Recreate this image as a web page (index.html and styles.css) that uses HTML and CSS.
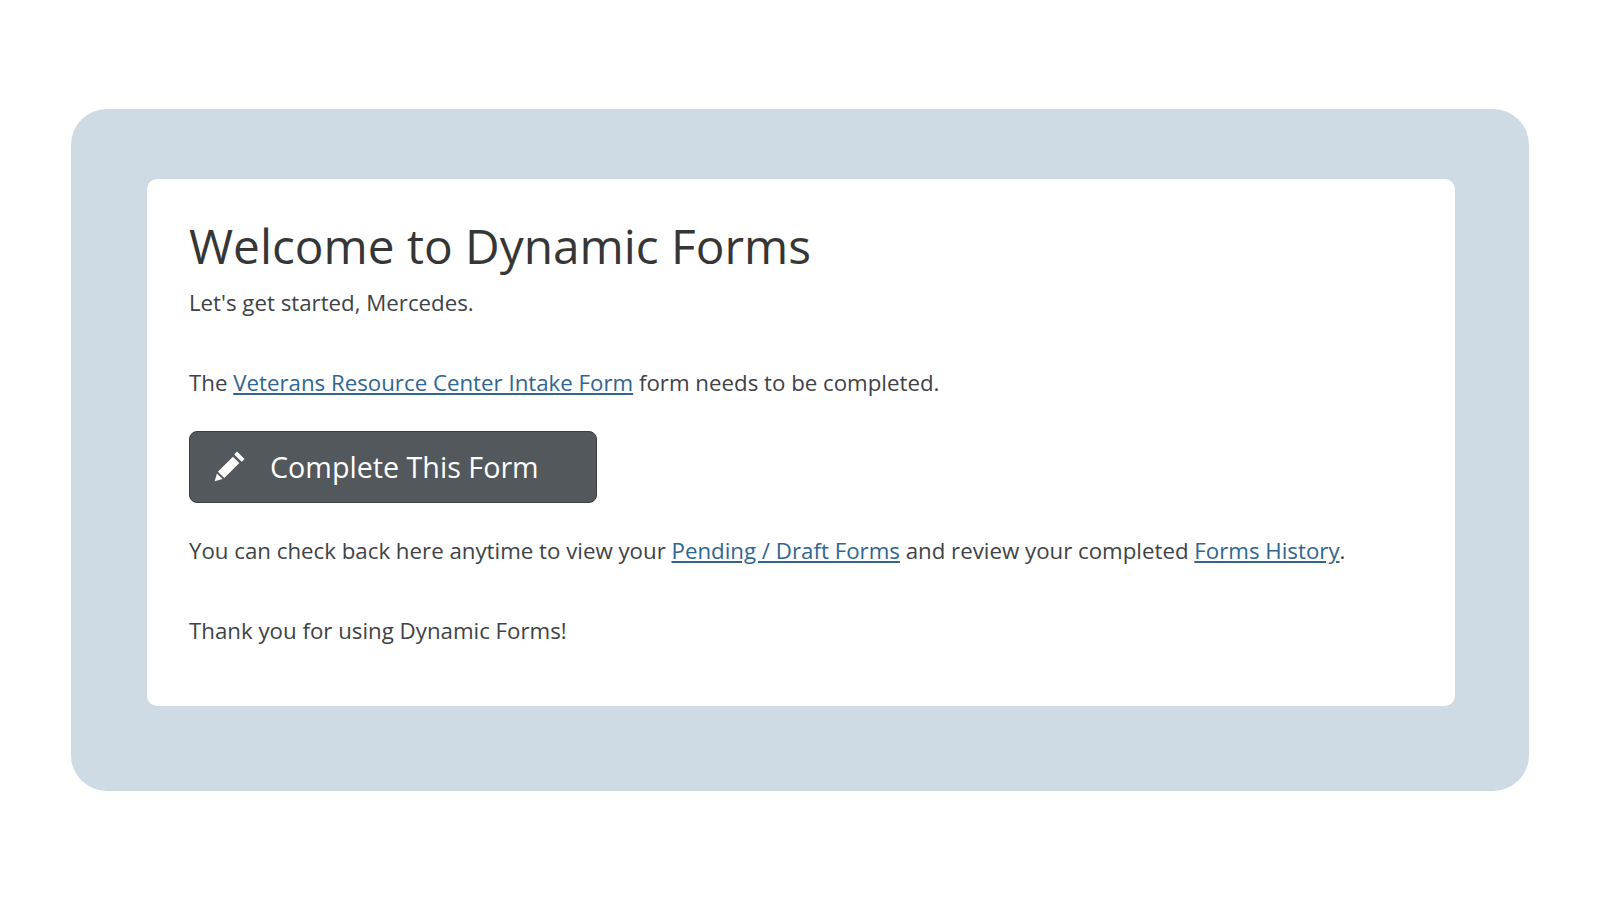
FILE: index.html
```html
<!DOCTYPE html>
<html lang="en">
<head>
<meta charset="utf-8">
<title>Dynamic Forms</title>
<link rel="stylesheet" href="styles.css">
</head>
<body>
<main class="panel">
  <section class="card">
    <h1 class="title">Welcome to Dynamic Forms</h1>
    <p class="lead">Let's get started, Mercedes.</p>
    <p class="notice">The <a href="#">Veterans Resource Center Intake Form</a> form needs to be completed.</p>
    <a class="button" href="#">
      <svg class="icon" viewBox="0 0 32 32" aria-hidden="true">
        <path d="M22.6 2.3 L29.7 9.4 L27.6 11.5 Q27 12 26.4 11.5 L20.5 5.6 Q20 5 20.5 4.4 Z M18.8 7.2 L24.8 13.2 L10.6 27.4 L4.6 21.4 Z M3.7 23 L9 28.3 L1.6 30.4 Z" fill="currentColor"/>
      </svg>
      <span>Complete This Form</span>
    </a>
    <p class="history">You can check back here anytime to view your <a href="#">Pending / Draft Forms</a> and review your completed <a href="#">Forms History</a>.</p>
    <p class="thanks">Thank you for using Dynamic Forms!</p>
  </section>
</main>
</body>
</html>
```
FILE: styles.css
```css
html, body { margin: 0; padding: 0; }
body {
  width: 1600px;
  height: 900px;
  background: #fff;
  font-family: "Open Sans", sans-serif;
  color: #404346;
  padding: 109px 71px 0;
  box-sizing: border-box;
}
.panel {
  width: 1458px;
  height: 682px;
  box-sizing: border-box;
  padding: 70px 74px 0 76px;
  background: #cedae4;
  border-radius: 36px;
}
.card {
  height: 527px;
  box-sizing: border-box;
  padding: 34px 42px 0;
  background: #fff;
  border-radius: 10px;
}
.title {
  margin: 0;
  font-size: 47.75px;
  line-height: 66px;
  font-weight: 400;
  color: #363636;
}
.lead, .notice, .history, .thanks {
  margin: 0;
  font-size: 22.27px;
  line-height: 32px;
}
.lead { margin-top: 8px; }
.notice { margin-top: 48px; }
.history { margin-top: 32px; }
.thanks { margin-top: 48px; }
a { color: #30668f; }
.button {
  display: flex;
  align-items: center;
  width: 408px;
  height: 72px;
  margin-top: 32px;
  box-sizing: border-box;
  padding: 0 0 2px 23px;
  gap: 23px;
  background: #53585c;
  border: 1px solid #3c3f42;
  border-radius: 8px;
  color: #fff;
  font-size: 28.7px;
  text-decoration: none;
}
.icon { width: 34px; height: 34px; flex: none; margin-bottom: 1px; }
```
